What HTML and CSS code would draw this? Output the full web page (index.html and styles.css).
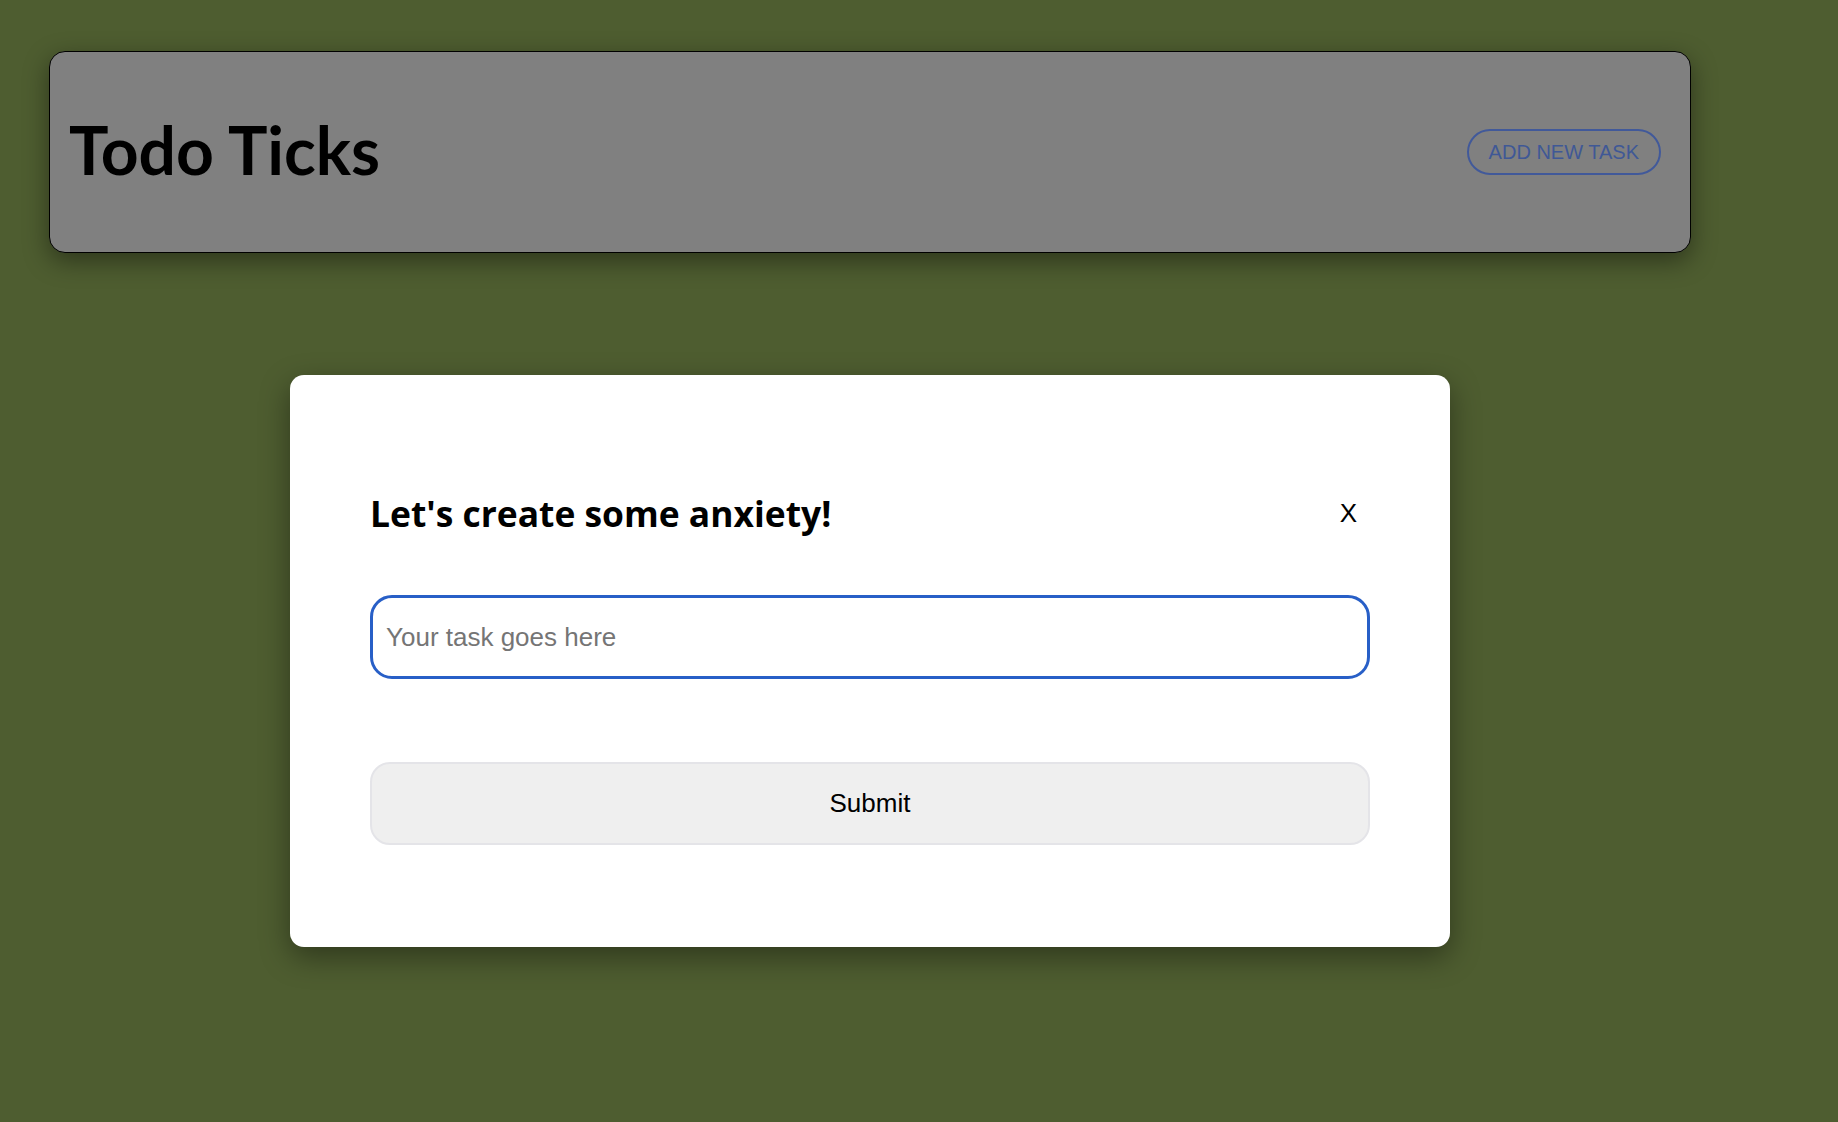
FILE: index.html
```html
<!DOCTYPE html>
<html lang="en">
<head>
<meta charset="utf-8">
<title>Todo Ticks</title>
<link rel="stylesheet" href="styles.css">
</head>
<body>
<div class="page">
  <header class="topbar">
    <h1 class="brand">Todo Ticks</h1>
    <button class="add-btn" type="button">Add new task</button>
  </header>
  <div class="modal">
    <div class="modal-head">
      <h2 class="modal-title">Let's create some anxiety!</h2>
      <button class="close-btn" type="button">X</button>
    </div>
    <input class="task-input" type="text" placeholder="Your task goes here">
    <button class="submit-btn" type="button">Submit</button>
  </div>
</div>
</body>
</html>
```
FILE: styles.css
```css
html, body {
  margin: 0;
  padding: 0;
}
body {
  background: #4e5d30;
  font-family: "Liberation Sans", Arial, sans-serif;
  min-height: 1122px;
}
.page {
  padding: 51px 0 0 49px;
  width: 1642px;
}
.topbar {
  box-sizing: border-box;
  height: 202px;
  background: #808080;
  border: 1px solid #000;
  border-radius: 16px;
  box-shadow: 0 8px 26px rgba(0, 0, 0, 0.42);
  display: flex;
  align-items: center;
  justify-content: space-between;
  padding: 0 29px 0 19px;
}
.brand {
  margin: 0 0 4px;
  font-family: Lato, sans-serif;
  font-weight: 700;
  font-size: 66px;
  line-height: 1;
  color: #000;
}
.add-btn {
  box-sizing: border-box;
  height: 46px;
  padding: 0 20px;
  border: 2px solid #41599a;
  border-radius: 23px;
  background: transparent;
  color: #3f5896;
  font-family: "Liberation Sans", Arial, sans-serif;
  font-size: 20px;
  text-transform: uppercase;
}
.modal {
  box-sizing: border-box;
  width: 1160px;
  height: 572px;
  margin: 122px auto 0;
  background: #fff;
  border-radius: 14px;
  box-shadow: 0 10px 30px rgba(0, 0, 0, 0.4);
  padding: 116px 80px 0;
  display: flex;
  flex-direction: column;
}
.modal-head {
  display: flex;
  align-items: center;
  justify-content: space-between;
  height: 44px;
}
.modal-title {
  margin: 0;
  font-family: "Open Sans", sans-serif;
  font-weight: 700;
  font-size: 35.4px;
  line-height: 44px;
  color: #000;
}
.close-btn {
  border: 0;
  background: transparent;
  padding: 0 13px 0 0;
  margin-bottom: 0;
  font-family: "Liberation Sans", Arial, sans-serif;
  font-size: 26px;
  color: #000;
}
.task-input {
  box-sizing: border-box;
  margin-top: 60px;
  width: 1000px;
  height: 84px;
  border: 3px solid #285fc7;
  border-radius: 22px;
  padding: 0 13px;
  font-family: "Liberation Sans", Arial, sans-serif;
  font-size: 26px;
  outline: none;
}
.task-input::placeholder {
  color: #757575;
}
.submit-btn {
  box-sizing: border-box;
  margin-top: 83px;
  width: 1000px;
  height: 83px;
  border: 2px solid #e4e4e8;
  border-radius: 20px;
  background: #efefef;
  font-family: "Liberation Sans", Arial, sans-serif;
  font-size: 26px;
  color: #000;
}
```
